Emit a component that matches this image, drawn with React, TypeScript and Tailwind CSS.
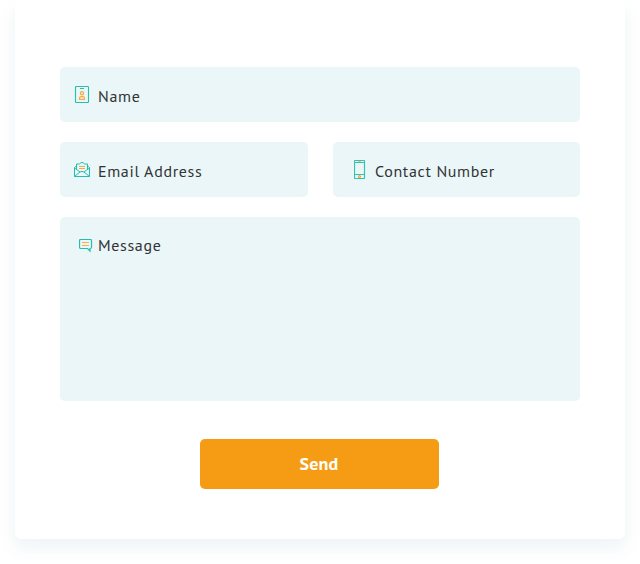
import React from "react";

function NameIcon() {
  return (
    <svg className="shrink-0" width="16" height="18" viewBox="0 0 16 18" fill="none" strokeWidth="1">
      <rect x="1.5" y="0.5" width="13" height="16" rx="0.8" stroke="#25c1ab" strokeWidth="1.100" />
      <path d="M6 2.500h4" stroke="#25c1ab" />
      <circle cx="8" cy="7.300" r="1.600" stroke="#f3ac3f" strokeWidth="1.300" />
      <path d="M5.500 13.300v-1c0-1 .7-1.700 1.600-1.700h1.800c.9 0 1.600.7 1.600 1.700v1z" stroke="#f3ac3f" strokeWidth="1.200" />
    </svg>
  );
}

function MailIcon() {
  return (
    <svg className="shrink-0" width="16" height="16" viewBox="0 0 16 16" fill="none" strokeWidth="1">
      <path d="M2.500 4 .5 5.500v9h15v-9L13.500 4M.5 6l5.500 4M15.500 6 10 10M.5 14.500 6 10q2-1.200 4 0l5.500 4.500M2.500 7V2h3L7 .6h2L10.500 2h3v5" stroke="#25bfa9" />
      <path d="M5 4.500h6M5 6.500h6" stroke="#f5a94a" />
    </svg>
  );
}

function PhoneIcon() {
  return (
    <svg className="shrink-0" width="12" height="20" viewBox="0 0 12 20" fill="none" strokeWidth="1">
      <rect x="0.500" y="0.500" width="10" height="18" rx="0.600" stroke="#35c2ae" strokeWidth="1.200" />
      <path d="M1 2.500h9M1 14.500h9" stroke="#35c2ae" />
      <path d="M4 1.500h3" stroke="#dfc579" />
      <circle cx="5.500" cy="16.500" r="1" stroke="#f3a92f" strokeWidth="1.200" />
    </svg>
  );
}

function MessageIcon() {
  return (
    <svg className="shrink-0" width="14" height="14" viewBox="0 0 14 14" fill="none" strokeWidth="1">
      <path d="M1.700.5h9.600q1.200 0 1.200 1.200v6.600q0 1.200-1.200 1.200H11V12L8.500 9.500H1.700Q.5 9.500.5 8.300V1.700Q.5.5 1.700.5z" stroke="#25bfa9" strokeWidth="1.200" />
      <path d="M3 3.500h7M3 6.500h7" stroke="#f5b04d" strokeWidth="1.200" />
    </svg>
  );
}

export default function App() {
  return (
    <main className="h-[564px] w-[640px] overflow-hidden bg-white px-[15px] font-['PT_Sans','Noto_Sans',sans-serif] text-[16px] leading-5 tracking-[0.65px] text-[#333]">
      <form className="h-[539px] rounded-[6px] bg-white px-[45px] pt-[67px] shadow-[0_8px_18px_rgba(27,100,110,0.08)]">
        <div className="flex h-[55px] items-start rounded-[5px] bg-[#eaf6f8] pl-3.5 pt-[19px]">
          <NameIcon />
          <span className="ml-2">Name</span>
        </div>
        <div className="mt-5 grid grid-cols-[248px_247px] gap-[25px]">
          <div className="flex h-[55px] items-start rounded-[5px] bg-[#eaf6f8] pl-3.5 pt-5">
            <MailIcon />
            <span className="-mt-px ml-2">Email Address</span>
          </div>
          <div className="flex h-[55px] items-start rounded-[5px] bg-[#eaf6f8] pl-[21px] pt-[18px]">
            <PhoneIcon />
            <span className="ml-[9px] mt-px">Contact Number</span>
          </div>
        </div>
        <div className="mt-5 flex h-[184px] items-start rounded-[5px] bg-[#eaf6f8] pl-[19px] pt-[22px]">
          <MessageIcon />
          <span className="-mt-1 ml-[5px]">Message</span>
        </div>
        <button type="button" className="ml-[140px] mt-[38px] h-[50px] w-[239px] rounded-[5px] bg-[#f69c14] pr-px text-[18px] font-bold tracking-[0.2px] text-white">Send</button>
      </form>
    </main>
  );
}
